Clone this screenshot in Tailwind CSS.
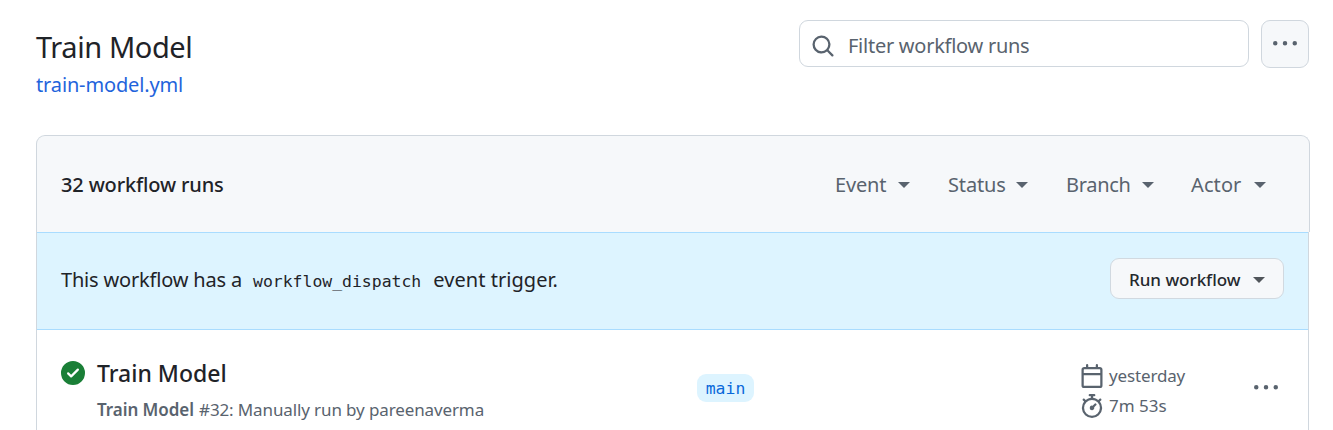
<!DOCTYPE html>
<html lang="en">
<head>
<meta charset="utf-8">
<title>Train Model</title>
<script src="https://cdn.jsdelivr.net/npm/@tailwindcss/browser@4"></script>
</head>
<body class="w-[1333px] h-[430px] overflow-hidden bg-white font-['Noto_Sans','Open_Sans',sans-serif] text-[#1f2328] text-[20px]">
<div class="flex flex-col pl-9 pr-[23px] pt-5 whitespace-nowrap">
  <header class="flex justify-between items-start h-[115px]">
    <div class="flex flex-col items-start pt-1">
      <h1 class="text-[29px] leading-[45px] tracking-[-0.4px]">Train Model</h1>
      <a class="text-[20px] leading-[31px] text-[#1f64dc] tracking-[-0.14px]">train-model.yml</a>
    </div>
    <div class="flex gap-3 mr-px">
      <div class="flex items-center w-[450px] h-[47px] border border-[#d0d7de] rounded-[9px] pl-[11px] pt-1 text-[#59636e]">
        <svg class="size-6" viewBox="0 0 16 16" fill="currentColor"><path d="M10.68 11.74a6 6 0 0 1-7.922-8.982 6 6 0 0 1 8.982 7.922l3.04 3.04a.749.749 0 0 1-.326 1.275.749.749 0 0 1-.734-.215ZM11.5 7a4.499 4.499 0 1 0-8.997 0A4.499 4.499 0 0 0 11.5 7Z"/></svg>
        <span class="ml-[13px] pt-px tracking-[-0.26px]">Filter workflow runs</span>
      </div>
      <button class="flex items-center justify-center size-12 border border-[#d0d7de] rounded-[9px] bg-[#f6f8fa] text-[#59636e]">
        <svg class="size-6" viewBox="0 0 16 16" fill="currentColor"><path d="M8 9a1.5 1.5 0 1 0 0-3 1.5 1.5 0 0 0 0 3ZM1.5 9a1.5 1.5 0 1 0 0-3 1.5 1.5 0 0 0 0 3Zm13 0a1.5 1.5 0 1 0 0-3 1.5 1.5 0 0 0 0 3Z"/></svg>
      </button>
    </div>
  </header>
  <section>
    <div class="flex items-center justify-between h-[97px] border border-b-0 border-[#d0d7de] rounded-t-[9px] bg-[#f6f8fa] pt-0.5 pl-6 pr-[43px]">
      <h2 class="font-[550] tracking-[-0.15px]">32 workflow runs</h2>
      <div class="flex text-[#59636e] tracking-[-0.15px]">
        <div class="flex items-center w-[75px] justify-between mr-[38px]"><span>Event</span><i class="border-x-6 border-t-6 border-x-transparent"></i></div>
        <div class="flex items-center w-[80px] justify-between mr-[38px]"><span>Status</span><i class="border-x-6 border-t-6 border-x-transparent"></i></div>
        <div class="flex items-center w-[88px] justify-between mr-[37px]"><span class="tracking-[-0.3px]">Branch</span><i class="border-x-6 border-t-6 border-x-transparent"></i></div>
        <div class="flex items-center w-[75px] justify-between"><span class="tracking-[0.1px]">Actor</span><i class="border-x-6 border-t-6 border-x-transparent"></i></div>
      </div>
    </div>
    <div class="mr-px border-x border-[#d0d7de]">
      <div class="flex items-center justify-between h-[98px] border-y border-[#a9dcff] bg-[#ddf4ff] pb-1.5 px-6">
        <p class="flex items-baseline pt-[3px] tracking-[-0.18px]"><span>This workflow has a</span><code class="font-['DejaVu_Sans_Mono',monospace] text-[16.45px] tracking-normal ml-[11px] mr-3">workflow_dispatch</code><span class="tracking-[0.05px]">event trigger.</span></p>
        <button class="flex items-center justify-between w-[174px] h-[41px] border border-[#d1d9e0] rounded-[9px] bg-[#f6f8fa] pt-[3px] px-[18px] text-[17px] font-[550] tracking-[-0.02px] text-[#25292e]"><span>Run workflow</span><i class="border-x-6 border-t-6 border-x-transparent border-t-[#50555a]"></i></button>
      </div>
      <div class="flex h-[101px] pl-6">
        <svg class="size-6 mt-[31px] text-[#1a7f37]" viewBox="0 0 16 16" fill="currentColor"><path d="M8 16A8 8 0 1 1 8 0a8 8 0 0 1 0 16Zm3.78-9.72a.751.751 0 0 0-.018-1.042.751.751 0 0 0-1.042-.018L6.75 9.19 5.28 7.72a.751.751 0 0 0-1.042.018.751.751 0 0 0-.018 1.042l2 2a.75.75 0 0 0 1.06 0Z"/></svg>
        <div class="w-[600px] ml-3 pt-[25px]">
          <h3 class="text-[23px] leading-[37px] font-medium">Train Model</h3>
          <p class="flex gap-[5px] text-[17px] leading-[36px] text-[#59636e]"><span class="font-semibold tracking-[-0.05px]">Train Model</span><span class="tracking-[-0.12px]">#32: Manually run by pareenaverma</span></p>
        </div>
        <div class="w-[383px] pt-11"><span class="flex w-[57px] h-7 justify-center items-center rounded-[9px] bg-[#ddf4ff] pt-0.5 text-[#0969da] font-['DejaVu_Sans_Mono',monospace] text-[16.45px]">main</span></div>
        <div class="w-[174px] pt-[31px] text-[17px] text-[#59636e]">
          <div class="flex items-center h-[30px] gap-[5px]"><svg class="size-6" viewBox="0 0 16 16" fill="currentColor"><path d="M4.75 0a.75.75 0 0 1 .75.75V2h5V.75a.75.75 0 0 1 1.5 0V2h1.25c.966 0 1.75.784 1.75 1.75v10.5A1.75 1.75 0 0 1 13.25 16H2.75A1.75 1.75 0 0 1 1 14.25V3.75C1 2.784 1.784 2 2.75 2H4V.75A.75.75 0 0 1 4.75 0ZM2.5 7.5v6.75c0 .138.112.25.25.25h10.5a.25.25 0 0 0 .25-.25V7.5Zm10.75-4H2.75a.25.25 0 0 0-.25.25V6h11V3.75a.25.25 0 0 0-.25-.25Z"/></svg><span class="tracking-[-0.15px]">yesterday</span></div>
          <div class="flex items-center h-[30px] gap-[5px]"><svg class="size-6" viewBox="0 0 16 16" fill="currentColor"><path d="M5.75.75A.75.75 0 0 1 6.5 0h3a.75.75 0 0 1 0 1.5h-.75v1l-.001.041a6.724 6.724 0 0 1 3.464 1.435l.007-.006.75-.75a.749.749 0 0 1 1.275.326.749.749 0 0 1-.215.734l-.75.75-.006.007a6.75 6.75 0 1 1-10.548 0L2.72 5.03l-.75-.75a.751.751 0 0 1 .018-1.042.751.751 0 0 1 1.042-.018l.75.75.007.006A6.72 6.72 0 0 1 7.25 2.541V1.5H6.5a.75.75 0 0 1-.75-.75ZM8 14.5a5.25 5.25 0 1 0-.001-10.501A5.25 5.25 0 0 0 8 14.5Zm.389-6.7 1.33-1.33a.75.75 0 1 1 1.061 1.06L9.45 8.861A1.503 1.503 0 0 1 8 10.75a1.499 1.499 0 1 1 .389-2.95Z"/></svg><span>7m 53s</span></div>
        </div>
        <svg class="size-6 mt-[46px] text-[#59636e]" viewBox="0 0 16 16" fill="currentColor"><path d="M8 9a1.5 1.5 0 1 0 0-3 1.5 1.5 0 0 0 0 3ZM1.5 9a1.5 1.5 0 1 0 0-3 1.5 1.5 0 0 0 0 3Zm13 0a1.5 1.5 0 1 0 0-3 1.5 1.5 0 0 0 0 3Z"/></svg>
      </div>
    </div>
  </section>
</div>
</body>
</html>
